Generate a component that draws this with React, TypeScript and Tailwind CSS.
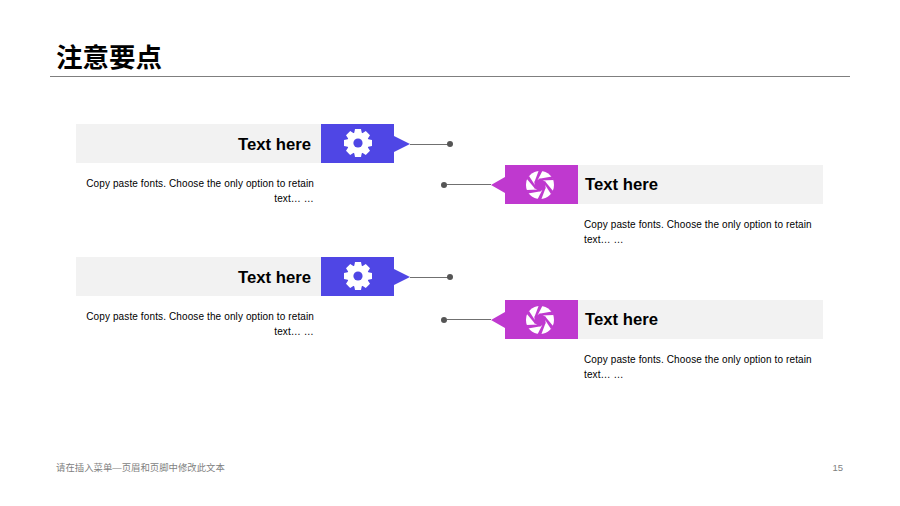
const gearTeeth = [0, 45, 90, 135, 180, 225, 270, 315];

function Gear() {
  return (
    <svg width="30" height="30" viewBox="0 0 30 30">
      <circle cx="15" cy="15" r="10.8" fill="#fff" />
      {gearTeeth.map((a) => (
        <path key={a} d="M11 6 L12 1 L18 1 L19 6 Z" fill="#fff" transform={`rotate(${a} 15 15)`} />
      ))}
      <circle cx="15" cy="15" r="4.6" fill="#4f46e5" />
    </svg>
  );
}

const blades = [0, 60, 120, 180, 240, 300];

function Shutter() {
  return (
    <svg width="30" height="30" viewBox="0 0 30 30">
      <circle cx="15" cy="15" r="14" fill="#fff" />
      <path d="M15 8.6 L20.5 11.8 L20.5 18.2 L15 21.4 L9.5 18.2 L9.5 11.8 Z" fill="#bf39cf" />
      {blades.map((a) => (
        <path key={a} d="M14.2 8.8 L27 6.6 L28.6 10 L16 10.6 Z" fill="#bf39cf" transform={`rotate(${a} 15 15)`} />
      ))}
    </svg>
  );
}

function Left() {
  return (
    <div className="h-[133px] w-[380px]">
      <div className="flex h-[39px] items-center">
        <div className="flex h-full w-[245px] items-center justify-end bg-[#f2f2f2] pt-[2px] pr-[10px] text-[16.7px] font-bold text-black">Text here</div>
        <div className="flex h-full w-[73px] items-center justify-center bg-[#4f46e5] pb-px pl-px"><Gear /></div>
        <svg width="16" height="16" viewBox="0 0 16 16" className="shrink-0"><path d="M0 0 L16 8 L0 16 Z" fill="#4f46e5" /></svg>
        <div className="mt-px h-px w-[40px] bg-[#707070]" />
        <div className="mt-px h-[6px] w-[6px] -translate-x-[3px] rounded-full bg-[#555555]" />
      </div>
      <p className="mt-[13px] w-[238px] text-right text-[10px] leading-[15px] tracking-[0.12px] text-black">Copy paste fonts. Choose the only option to retain text… …</p>
    </div>
  );
}

function Right() {
  return (
    <div className="h-[135px] w-[382px]">
      <div className="flex h-[39px] items-center">
        <div className="h-[6px] w-[6px] rounded-full bg-[#555555]" />
        <div className="h-px w-[44px] bg-[#707070]" />
        <svg width="14" height="16" viewBox="0 0 14 16" className="shrink-0"><path d="M14 0 L0 8 L14 16 Z" fill="#bf39cf" /></svg>
        <div className="flex h-full w-[73px] items-center justify-center bg-[#bf39cf] pr-[3px]"><Shutter /></div>
        <div className="flex h-full w-[245px] items-center bg-[#f2f2f2] pl-[7px] text-[16.7px] font-bold text-black">Text here</div>
      </div>
      <p className="mt-[13px] ml-[143px] w-[238px] text-[10px] leading-[15px] tracking-[0.12px] text-black">Copy paste fonts. Choose the only option to retain text… …</p>
    </div>
  );
}

export default function App() {
  return (
    <div className="flex h-[506px] w-[900px] flex-col overflow-hidden bg-white font-['Liberation_Sans','Noto_Sans_CJK_SC',sans-serif]">
      <div className="mx-[50px] mt-[38px] h-[39px] border-b border-[#7f7f7f] pl-[6px]">
        <h1 className="pt-px text-[26.5px] leading-[38px] font-bold text-black">注意要点</h1>
      </div>
      <div className="flex flex-1 pl-[76px]">
        <div className="w-[365px] pt-[47px]">
          <Left />
          <Left />
        </div>
        <div className="pt-[88px]">
          <Right />
          <Right />
        </div>
      </div>
      <div className="mb-[31px] flex items-center justify-between pr-[57px] pl-[56px] text-[#7f7f7f]">
        <span className="text-[9.4px] leading-[14px]">请在插入菜单—页眉和页脚中修改此文本</span>
        <span className="text-[9.5px] leading-[14px]">15</span>
      </div>
    </div>
  );
}
